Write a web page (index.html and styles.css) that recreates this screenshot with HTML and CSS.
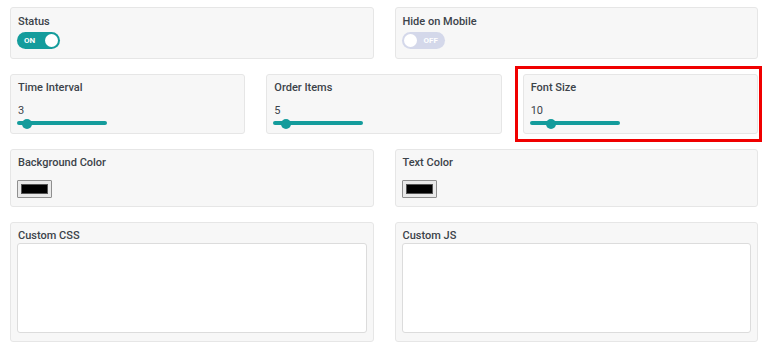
FILE: index.html
```html
<!DOCTYPE html>
<html>

<head>
    <meta charset="UTF-8">
    <title>Settings</title>
    <link rel="stylesheet" href="styles.css">
</head>

<body>
    <div class="settings">
        <div class="row two">
            <div class="card card-toggle">
                <b class="label">Status</b>
                <div class="switch on"><span class="switch-text">ON</span><i class="knob"></i></div>
            </div>
            <div class="card card-toggle">
                <b class="label">Hide on Mobile</b>
                <div class="switch off"><i class="knob"></i><span class="switch-text">OFF</span></div>
            </div>
        </div>

        <div class="row three">
            <div class="card card-range">
                <b class="label">Time Interval</b>
                <div class="value">3</div>
                <div class="range"><i class="thumb" style="left:5px"></i></div>
            </div>
            <div class="card card-range">
                <b class="label">Order Items</b>
                <div class="value">5</div>
                <div class="range"><i class="thumb" style="left:8px"></i></div>
            </div>
            <div class="card card-range highlighted">
                <b class="label">Font Size</b>
                <div class="value">10</div>
                <div class="range"><i class="thumb" style="left:16px"></i></div>
                <div class="mark"></div>
            </div>
        </div>

        <div class="row two">
            <div class="card card-color">
                <b class="label">Background Color</b>
                <div class="swatch"><i></i></div>
            </div>
            <div class="card card-color">
                <b class="label">Text Color</b>
                <div class="swatch"><i></i></div>
            </div>
        </div>

        <div class="row two">
            <div class="card card-code">
                <b class="label">Custom CSS</b>
                <textarea></textarea>
            </div>
            <div class="card card-code">
                <b class="label">Custom JS</b>
                <textarea></textarea>
            </div>
        </div>
    </div>
</body>

</html>
```

FILE: styles.css
```css
* {
    box-sizing: border-box;
}
body {
    margin: 0;
    background: white;
    font-family: Roboto, 'Liberation Sans', sans-serif;
    font-size: 11px;
    color: #3c434a;
}
.settings {
    display: flex;
    flex-direction: column;
    gap: 15px;
    padding: 7px 16px 0 10px;
}
.row {
    display: grid;
    column-gap: 21px;
}
.two {
    grid-template-columns: 1fr 1fr;
}
.three {
    grid-template-columns: 1fr 1fr 1fr;
}
.card {
    display: flex;
    flex-direction: column;
    align-items: flex-start;
    background: #f7f7f7;
    border: 1px solid #e6e6e6;
    border-radius: 3px;
    padding: 6px 6px 8px;
    position: relative;
}
.label {
    display: block;
    font-weight: 500;
    line-height: 14px;
    padding-left: 1px;
    color: #3c434a;
}

/* toggle */
.card-toggle {
    height: 52px;
    padding-top: 7px;
}
.switch {
    margin-top: 3px;
    width: 43px;
    height: 17px;
    border-radius: 9px;
    display: flex;
    align-items: center;
    padding: 0 2px;
}
.switch.on {
    background: #149c9c;
    justify-content: space-between;
    padding-left: 7px;
}
.switch.off {
    background: #d4d8ea;
    gap: 7px;
}
.switch-text {
    color: white;
    font-size: 8px;
    font-weight: 700;
}
.knob {
    width: 13px;
    height: 13px;
    border-radius: 50%;
    background: white;
}

/* slider */
.card-range {
    height: 60px;
}
.value {
    margin-top: 9px;
    line-height: 14px;
    padding-left: 1px;
}
.range {
    position: relative;
    width: 90px;
    height: 5px;
    margin-top: 3px;
    border-radius: 3px;
    background: #149c9c;
}
.thumb {
    position: absolute;
    top: -2.5px;
    width: 10px;
    height: 10px;
    border-radius: 50%;
    background: #149c9c;
}
.mark {
    position: absolute;
    top: -9px;
    left: -9px;
    right: -5px;
    bottom: -9px;
    border: 3px solid #f00000;
}

/* color */
.card-color {
    height: 58px;
}
.swatch {
    margin-top: 10px;
    width: 35px;
    height: 19px;
    border: 1px solid #8f8f8f;
    background: #e9e9e9;
    padding: 3px 3px;
    border-radius: 1px;
}
.swatch i {
    display: block;
    height: 100%;
    background: #000;
    border: 1px solid #555;
}

/* code */
.card-code {
    height: 120px;
}
textarea {
    width: 100%;
    height: 90px;
    margin: 0;
    background: white;
    border: 1px solid #dcdcdc;
    border-radius: 3px;
    resize: none;
}
```
